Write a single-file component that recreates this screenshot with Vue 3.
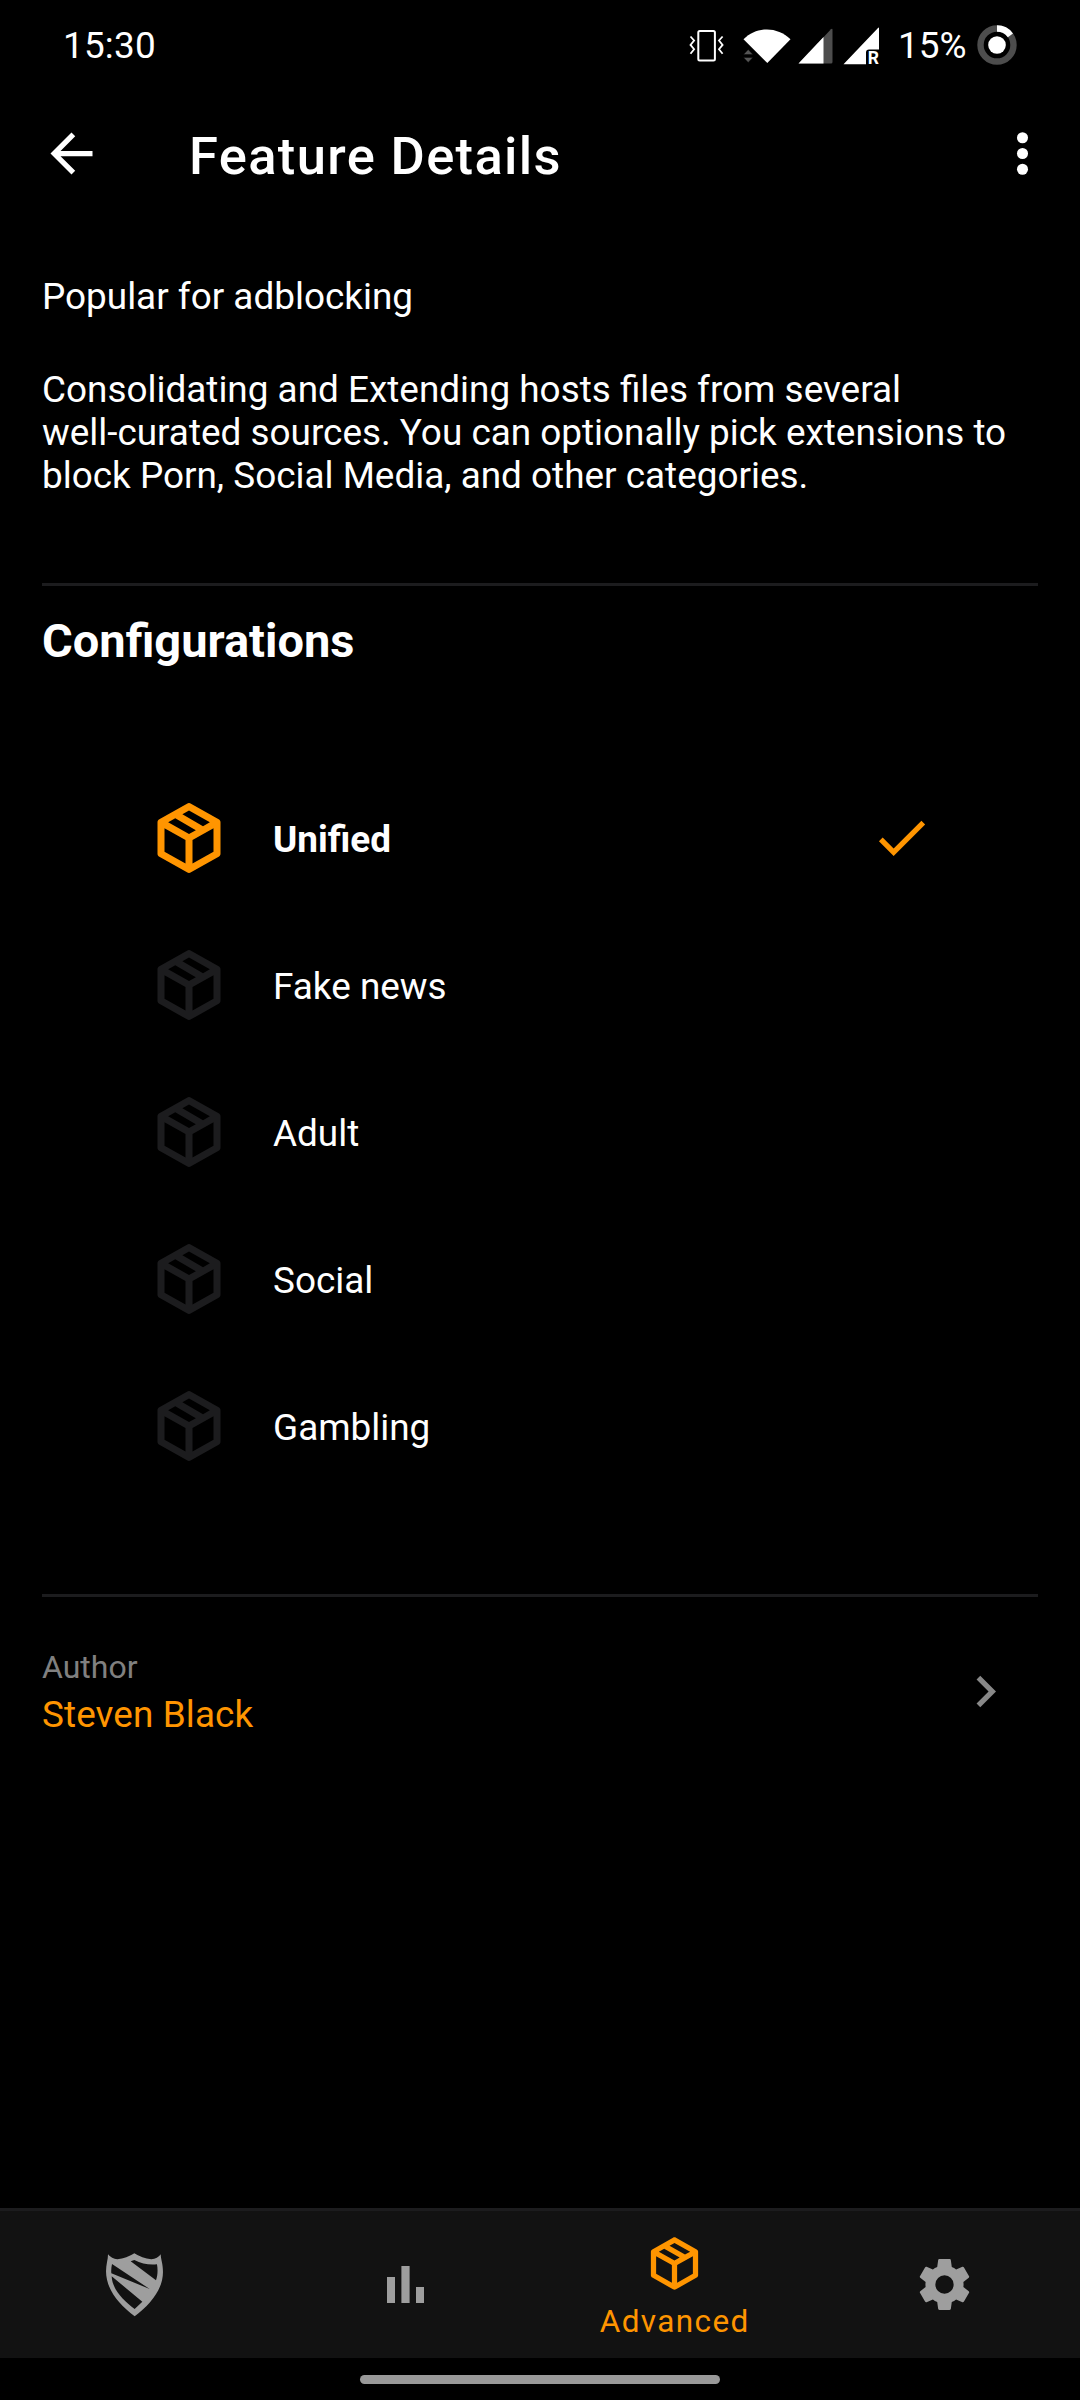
<script setup>
const configs = [
  { name: 'Unified', active: true },
  { name: 'Fake news', active: false },
  { name: 'Adult', active: false },
  { name: 'Social', active: false },
  { name: 'Gambling', active: false },
]

const boxPath =
  'M21,16.5C21,16.88 20.79,17.21 20.47,17.38L12.57,21.82C12.41,21.94 12.21,22 12,22C11.79,22 11.59,21.94 11.43,21.82L3.53,17.38C3.21,17.21 3,16.88 3,16.5V7.5C3,7.12 3.21,6.79 3.53,6.62L11.43,2.18C11.59,2.06 11.79,2 12,2C12.21,2 12.41,2.06 12.57,2.18L20.47,6.62C20.79,6.79 21,7.12 21,7.5V16.5M12,4.15L10.11,5.22L16,8.61L17.96,7.5L12,4.15M6.04,7.5L12,10.85L13.96,9.75L8.08,6.35L6.04,7.5M5,15.91L11,19.29V12.58L5,9.21V15.91M19,15.91V9.21L13,12.58V19.29L19,15.91Z'
</script>

<template>
  <div class="screen">
    <header class="status">
      <span class="clock">15:30</span>
      <div class="indicators">
        <svg class="vibrate" viewBox="0 0 36 34" fill="none" stroke="#fff">
          <rect x="9.3" y="2" width="16.6" height="29.4" rx="1.5" stroke-width="2" />
          <path d="M1.5 7.5l3.6 4-3.6 4.4 3.6 4.4-3.6 4.5M33.6 7.5l-3.6 4 3.6 4.4-3.6 4.4 3.6 4.5" stroke-width="1.8" />
        </svg>
        <svg class="wifi" viewBox="0 0 48 36">
          <path d="M0.5 11.3C14 -1.8 34 -1.8 47.5 11.3L24.3 35z" fill="#fff" />
          <path d="M0.5 26.5L5.2 21.6L9.9 26.5zM0.5 29.5L5.2 34.4L9.9 29.5z" fill="#555" stroke="#000" stroke-width="0.4" />
        </svg>
        <svg class="signal-a" viewBox="0 0 35 36">
          <path d="M0.5 35.5L33 1.2Q34.5 0 34.5 2V34Q34.5 35.5 33 35.5z" fill="#4d4d4d" />
          <path d="M0.5 35.5L25.5 9V35.5z" fill="#fff" />
        </svg>
        <svg class="signal-b" viewBox="0 0 36 38">
          <path d="M0.5 37.2L35 1Q36 0 36 1.6V22.5H26Q23 22.5 23 25.5V37.2z" fill="#fff" />
          <text x="24.8" y="37.2" fill="#fff" font-size="17.5" font-weight="700">R</text>
        </svg>
        <span class="percent">15%</span>
        <svg class="battery" viewBox="0 0 40 40">
          <circle cx="20" cy="20" r="16.5" fill="none" stroke="#4d4d4d" stroke-width="6.4" />
          <path d="M20 3.5A16.5 16.5 0 0 1 33.4 10.3" fill="none" stroke="#fff" stroke-width="6.4" />
          <circle cx="20" cy="20" r="8.8" fill="#fff" />
        </svg>
      </div>
    </header>

    <div class="toolbar">
      <svg class="icon" viewBox="0 0 24 24" fill="#fff"><path d="M20 11H7.83l5.59-5.59L12 4l-8 8 8 8 1.41-1.41L7.83 13H20z" /></svg>
      <h1 class="title">Feature Details</h1>
      <svg class="icon" viewBox="0 0 24 24" fill="#fff">
        <circle cx="12" cy="6" r="2.1" /><circle cx="12" cy="12" r="2.1" /><circle cx="12" cy="18" r="2.1" />
      </svg>
    </div>

    <main class="content">
      <p class="text">Popular for adblocking</p>
      <p class="text desc">Consolidating and Extending hosts files from several<br />well-curated sources. You can optionally pick extensions to<br />block Porn, Social Media, and other categories.</p>
      <div class="divider"></div>
      <h2 class="heading">Configurations</h2>
      <ul class="configs">
        <li v-for="c in configs" :key="c.name" class="config" :class="{ active: c.active }">
          <svg class="box" viewBox="0 0 24 24"><path :d="boxPath" /></svg>
          <span class="label">{{ c.name }}</span>
          <svg v-if="c.active" class="icon check" viewBox="0 0 24 24"><path d="M9 16.17L4.83 12l-1.42 1.41L9 19 21 7l-1.41-1.41z" /></svg>
        </li>
      </ul>
      <div class="divider"></div>
      <div class="author">
        <div class="author-info">
          <span class="caption">Author</span>
          <span class="author-name">Steven Black</span>
        </div>
        <svg class="icon chevron" viewBox="0 0 24 24" fill="#888"><path d="M10 6L8.59 7.41 13.17 12l-4.58 4.59L10 18l6-6z" /></svg>
      </div>
    </main>

    <nav class="nav">
      <div class="tab">
        <svg class="shield" viewBox="78 188 171 190">
          <path fill-rule="evenodd" d="M84 192Q95 206 112 207Q140 204 163 189Q186 204 214 207Q233 206 242 192C243 208 249 222 249 245C249 296 212 342 164 378C116 342 78 296 78 243C78 222 84 208 84 192ZM152 213L163 209Q196 226 231 222C234 240 233 256 228 270ZM96 221L209 296L94 249C93 240 94 230 96 221ZM95 258L187 334L164 356C127 329 96 294 95 258Z" />
        </svg>
      </div>
      <div class="tab">
        <svg class="bars" viewBox="0 0 37 37"><path d="M0 11H8V37H0zM14.4 0H22.6V37H14.4zM29 21H37V37H29z" /></svg>
      </div>
      <div class="tab current">
        <svg class="icon" viewBox="0 0 24 24"><path :d="boxPath" /></svg>
        <span class="tab-label">Advanced</span>
      </div>
      <div class="tab">
        <svg class="gear" viewBox="0 0 24 24"><path d="M12,15.6A3.6,3.6 0 0,1 8.4,12A3.6,3.6 0 0,1 12,8.4A3.6,3.6 0 0,1 15.6,12A3.6,3.6 0 0,1 12,15.6M19.43,12.97C19.47,12.65 19.5,12.33 19.5,12C19.5,11.67 19.47,11.34 19.43,11L21.54,9.37C21.73,9.22 21.78,8.95 21.66,8.73L19.66,5.27C19.54,5.05 19.27,4.96 19.05,5.05L16.56,6.05C16.04,5.66 15.5,5.32 14.87,5.07L14.5,2.42C14.46,2.18 14.25,2 14,2H10C9.75,2 9.54,2.18 9.5,2.42L9.13,5.07C8.5,5.32 7.96,5.66 7.44,6.05L4.95,5.05C4.73,4.96 4.46,5.05 4.34,5.27L2.34,8.73C2.21,8.95 2.27,9.22 2.46,9.37L4.57,11C4.53,11.34 4.5,11.67 4.5,12C4.5,12.33 4.53,12.65 4.57,12.97L2.46,14.63C2.27,14.78 2.21,15.05 2.34,15.27L4.34,18.73C4.46,18.95 4.73,19.03 4.95,18.95L7.44,17.94C7.96,18.34 8.5,18.68 9.13,18.93L9.5,21.58C9.54,21.82 9.75,22 10,22H14C14.25,22 14.46,21.82 14.5,21.58L14.87,18.93C15.5,18.67 16.04,18.34 16.56,17.94L19.05,18.95C19.27,19.03 19.54,18.95 19.66,18.73L21.66,15.27C21.78,15.05 21.73,14.78 21.54,14.63L19.43,12.97Z" /></svg>
      </div>
    </nav>
    <div class="gesture"><div class="pill"></div></div>
  </div>
</template>

<style>
body {
  margin: 0;
  background: #000;
}
</style>

<style scoped>
.screen {
  width: 1080px;
  height: 2400px;
  display: flex;
  flex-direction: column;
  background: #000;
  color: #fff;
  font-family: Roboto, "Liberation Sans", sans-serif;
  font-size: 36.9px;
  line-height: 43px;
}
svg { display: block; flex: none; overflow: visible; }
h1, h2, p, ul { margin: 0; padding: 0; font-weight: 400; }
.icon { width: 63px; height: 63px; }

.status {
  display: flex;
  justify-content: space-between;
  align-items: flex-start;
  height: 90px;
  padding: 0 63px 0 63px;
}
.clock, .percent { margin-top: 24px; }
.clock { letter-spacing: 0.2px; }
.indicators { display: flex; }
.vibrate { width: 36px; height: 34px; margin: 29px 18px 0 0; }
.wifi { width: 48px; height: 36px; margin: 28px 7px 0 0; }
.signal-a { width: 35px; height: 36px; margin: 28px 10px 0 0; }
.signal-b { width: 36px; height: 38px; margin: 27px 0 0; }
.percent { width: 67px; margin-left: 19px; margin-right: 12px; }
.battery { width: 40px; height: 40px; margin-top: 25px; }

.toolbar {
  display: flex;
  align-items: center;
  height: 126px;
  padding: 0 26px 0 40px;
}
.title {
  flex: 1;
  margin: 5px 0 0 86px;
  font-size: 52.5px;
  line-height: 62px;
  font-weight: 500;
  letter-spacing: 1.35px;
}

.content {
  flex: 1;
  padding: 59px 42px 0;
}
.desc { margin-top: 50px; }
.divider { height: 3px; background: #1c1c1e; }
.desc + .divider { margin-top: 86px; }
.heading {
  margin-top: 27px;
  font-size: 47px;
  line-height: 56px;
  font-weight: 700;
}
.configs { list-style: none; margin: 95px 0; }
.config {
  display: flex;
  align-items: center;
  height: 147px;
  padding: 0 105px;
}
.box { width: 84px; height: 84px; fill: #1c1c1e; }
.label { flex: 1; margin: 4px 0 0 42px; }
.active .box, .check { fill: #ff9500; }
.active .label { font-weight: 700; }

.author {
  display: flex;
  justify-content: space-between;
  align-items: center;
  margin-top: 52px;
  padding-right: 21px;
}
.author-info { display: flex; flex-direction: column; gap: 7px; }
.caption { font-size: 32px; line-height: 37px; color: #808080; }
.author-name { color: #ff9500; letter-spacing: 0.1px; }
.chevron { margin-bottom: 2px; }

.nav {
  display: flex;
  height: 147px;
  padding-right: 1px;
  border-top: 3px solid #1c1c1e;
  background: #121212;
  fill: #9e9e9e;
}
.tab {
  flex: 1;
  display: flex;
  flex-direction: column;
  align-items: center;
  justify-content: center;
}
.tab:first-child { padding-right: 1px; }
.tab.current { justify-content: flex-start; padding-top: 21px; fill: #ff9500; color: #ff9500; }
.tab-label { margin-top: 8px; font-size: 31.5px; line-height: 37px; letter-spacing: 1.4px; }
.shield { width: 57px; height: 63.3px; }
.bars { width: 37px; height: 37px; }
.gear { width: 61px; height: 61px; }
.gesture { display: flex; justify-content: center; height: 42px; }
.pill { width: 360px; height: 9px; margin-top: 17px; border-radius: 5px; background: #999; }
</style>
